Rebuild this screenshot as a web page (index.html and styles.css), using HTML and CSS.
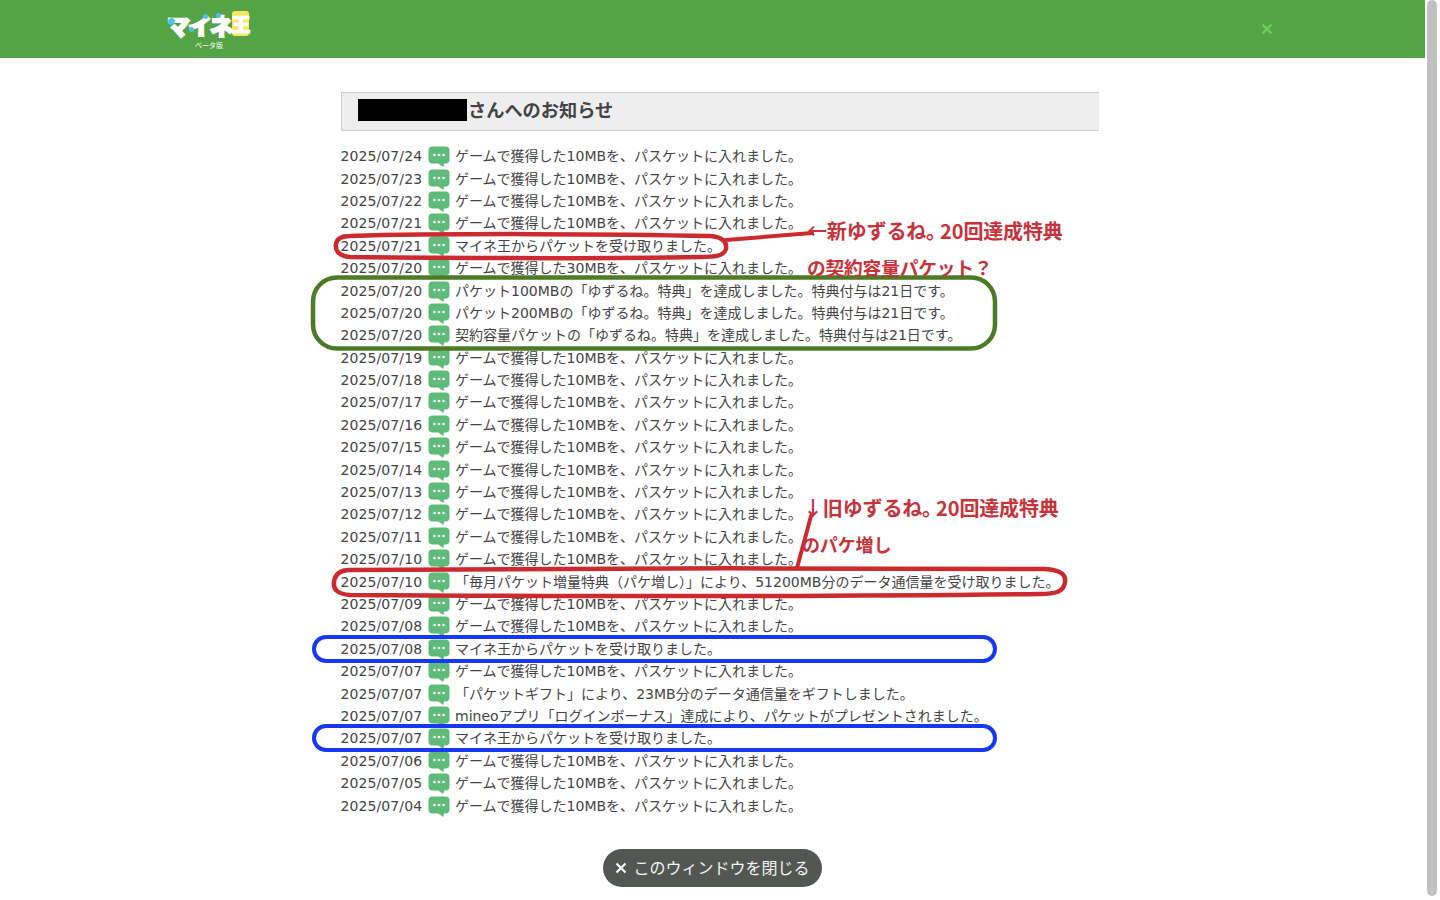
FILE: index.html
```
<!DOCTYPE html>
<html lang="ja">
<head>
<meta charset="utf-8">
<title>マイネ王 お知らせ</title>
<link rel="stylesheet" href="styles.css">
</head>
<body>
<svg width="0" height="0" class="defs"><defs>
<symbol id="bubble" viewBox="0 0 22 22">
<path d="M4.5 0.5H17.5A4 4 0 0 1 21.5 4.5V13.5A4 4 0 0 1 17.5 17.500H16L15.500 21L10 17.500H4.500A4 4 0 0 1 0.500 13.500V4.500A4 4 0 0 1 4.500 0.500Z" fill="#5fbb79"/>
<circle cx="6.500" cy="9" r="1.300" fill="#fff"/><circle cx="11" cy="9" r="1.300" fill="#fff"/><circle cx="15.500" cy="9" r="1.300" fill="#fff"/>
</symbol>
</defs></svg>
<div class="window">
  <main class="page">
    <header class="topbar">
      <div class="logo">
        <div class="logo-word"><span class="logo-kana">マイネ</span><span class="logo-king">王</span>
          <i class="spot s1"></i><i class="spot s2"></i><i class="spot s3"></i><i class="spot s4"></i>
        </div>
        <div class="logo-sub">ベータ版</div>
      </div>
      <svg class="top-close" width="12" height="12" viewBox="0 0 12 12"><path d="M1.500 1.500L10.500 10.500M10.500 1.500L1.500 10.500" stroke="#6ed05e" stroke-width="2"/></svg>
    </header>
    <section class="content">
      <h1 class="title"><span class="redact"></span><span class="title-text">さんへのお知らせ</span></h1>
      <ul class="list">
        <li><time>2025/07/24</time><svg class="ico"><use href="#bubble"/></svg><span>ゲームで獲得した10MBを、パスケットに入れました。</span></li>
        <li><time>2025/07/23</time><svg class="ico"><use href="#bubble"/></svg><span>ゲームで獲得した10MBを、パスケットに入れました。</span></li>
        <li><time>2025/07/22</time><svg class="ico"><use href="#bubble"/></svg><span>ゲームで獲得した10MBを、パスケットに入れました。</span></li>
        <li><time>2025/07/21</time><svg class="ico"><use href="#bubble"/></svg><span>ゲームで獲得した10MBを、パスケットに入れました。</span></li>
        <li><time>2025/07/21</time><svg class="ico"><use href="#bubble"/></svg><span>マイネ王からパケットを受け取りました。</span></li>
        <li><time>2025/07/20</time><svg class="ico"><use href="#bubble"/></svg><span>ゲームで獲得した30MBを、パスケットに入れました。</span></li>
        <li><time>2025/07/20</time><svg class="ico"><use href="#bubble"/></svg><span>パケット100MBの「ゆずるね。特典」を達成しました。特典付与は21日です。</span></li>
        <li><time>2025/07/20</time><svg class="ico"><use href="#bubble"/></svg><span>パケット200MBの「ゆずるね。特典」を達成しました。特典付与は21日です。</span></li>
        <li><time>2025/07/20</time><svg class="ico"><use href="#bubble"/></svg><span>契約容量パケットの「ゆずるね。特典」を達成しました。特典付与は21日です。</span></li>
        <li><time>2025/07/19</time><svg class="ico"><use href="#bubble"/></svg><span>ゲームで獲得した10MBを、パスケットに入れました。</span></li>
        <li><time>2025/07/18</time><svg class="ico"><use href="#bubble"/></svg><span>ゲームで獲得した10MBを、パスケットに入れました。</span></li>
        <li><time>2025/07/17</time><svg class="ico"><use href="#bubble"/></svg><span>ゲームで獲得した10MBを、パスケットに入れました。</span></li>
        <li><time>2025/07/16</time><svg class="ico"><use href="#bubble"/></svg><span>ゲームで獲得した10MBを、パスケットに入れました。</span></li>
        <li><time>2025/07/15</time><svg class="ico"><use href="#bubble"/></svg><span>ゲームで獲得した10MBを、パスケットに入れました。</span></li>
        <li><time>2025/07/14</time><svg class="ico"><use href="#bubble"/></svg><span>ゲームで獲得した10MBを、パスケットに入れました。</span></li>
        <li><time>2025/07/13</time><svg class="ico"><use href="#bubble"/></svg><span>ゲームで獲得した10MBを、パスケットに入れました。</span></li>
        <li><time>2025/07/12</time><svg class="ico"><use href="#bubble"/></svg><span>ゲームで獲得した10MBを、パスケットに入れました。</span></li>
        <li><time>2025/07/11</time><svg class="ico"><use href="#bubble"/></svg><span>ゲームで獲得した10MBを、パスケットに入れました。</span></li>
        <li><time>2025/07/10</time><svg class="ico"><use href="#bubble"/></svg><span>ゲームで獲得した10MBを、パスケットに入れました。</span></li>
        <li><time>2025/07/10</time><svg class="ico"><use href="#bubble"/></svg><span>「毎月パケット増量特典（パケ増し）」により、51200MB分のデータ通信量を受け取りました。</span></li>
        <li><time>2025/07/09</time><svg class="ico"><use href="#bubble"/></svg><span>ゲームで獲得した10MBを、パスケットに入れました。</span></li>
        <li><time>2025/07/08</time><svg class="ico"><use href="#bubble"/></svg><span>ゲームで獲得した10MBを、パスケットに入れました。</span></li>
        <li><time>2025/07/08</time><svg class="ico"><use href="#bubble"/></svg><span>マイネ王からパケットを受け取りました。</span></li>
        <li><time>2025/07/07</time><svg class="ico"><use href="#bubble"/></svg><span>ゲームで獲得した10MBを、パスケットに入れました。</span></li>
        <li><time>2025/07/07</time><svg class="ico"><use href="#bubble"/></svg><span>「パケットギフト」により、23MB分のデータ通信量をギフトしました。</span></li>
        <li><time>2025/07/07</time><svg class="ico"><use href="#bubble"/></svg><span>mineoアプリ「ログインボーナス」達成により、パケットがプレゼントされました。</span></li>
        <li><time>2025/07/07</time><svg class="ico"><use href="#bubble"/></svg><span>マイネ王からパケットを受け取りました。</span></li>
        <li><time>2025/07/06</time><svg class="ico"><use href="#bubble"/></svg><span>ゲームで獲得した10MBを、パスケットに入れました。</span></li>
        <li><time>2025/07/05</time><svg class="ico"><use href="#bubble"/></svg><span>ゲームで獲得した10MBを、パスケットに入れました。</span></li>
        <li><time>2025/07/04</time><svg class="ico"><use href="#bubble"/></svg><span>ゲームで獲得した10MBを、パスケットに入れました。</span></li>
      </ul>
    </section>
    <div class="foot">
      <a class="close-btn"><svg width="12" height="12" viewBox="0 0 12 12"><path d="M1.500 1.500L10.500 10.500M10.500 1.500L1.500 10.500" stroke="#fff" stroke-width="2.200"/></svg><span class="close-label">このウィンドウを閉じる</span></a>
    </div>
  </main>
  <div class="scrollbar"><div class="thumb"></div></div>
</div>

<svg class="marks" width="1440" height="900" viewBox="0 0 1440 900">
  <g fill="none" stroke-linecap="round" stroke-linejoin="round">
    <path d="M350 236C450 233 620 234 710 236C724 237 727 243 726 249C724 256 715 257 700 257C600 259 450 258 350 257C338 256 335 250 336 244C337 238 342 236 350 236Z" stroke="#cb2b2e" stroke-width="4.500"/>
    <path d="M726 240L812 233" stroke="#cb2b2e" stroke-width="4"/>
    <rect x="313" y="277.500" width="682" height="71" rx="24" stroke="#4c7a25" stroke-width="4.500"/>
    <path d="M350 570C500 568 850 568 1045 569C1060 570 1066 574 1065 582C1064 592 1055 594 1040 594C800 597 500 596 350 595C338 594 333 590 334 582C335 574 340 570 350 570Z" stroke="#cb2b2e" stroke-width="4.500"/>
    <path d="M811 516L797 568" stroke="#cb2b2e" stroke-width="4"/>
    <rect x="314" y="637" width="681" height="24" rx="12" stroke="#1638f2" stroke-width="4"/>
    <rect x="314" y="726" width="681" height="24" rx="12" stroke="#1638f2" stroke-width="4"/>
  </g>
</svg>
<div class="note n1"><span class="arrow">←</span>新ゆずるね<span class="kuten">。</span>20回達成特典</div>
<div class="note n2">の契約容量パケット？</div>
<div class="note n3"><span class="arrow">↓</span>旧ゆずるね<span class="kuten">。</span>20回達成特典</div>
<div class="note n4">のパケ増し</div>
</body>
</html>
```
FILE: styles.css
```
* { box-sizing: border-box; }
html, body { margin: 0; padding: 0; height: 900px; overflow: hidden; background: #fff; }
body {
  font-family: "DejaVu Sans", "Noto Sans CJK JP", sans-serif;
  color: #444;
  position: relative;
}
.defs { position: absolute; }
.window { display: flex; height: 900px; }
.page { width: 1425px; display: flex; flex-direction: column; }

.topbar {
  height: 58px;
  background: #52a444;
  display: flex;
  align-items: flex-start;
  padding-left: 167px;
  padding-right: 152px;
  justify-content: space-between;
}
.top-close { margin-top: 23px; }
.logo { width: 83px; padding-top: 11px; }
.logo-word {
  position: relative;
  display: flex;
  height: 29px;
  font-family: "Noto Sans CJK JP", sans-serif;
  font-weight: 900;
  line-height: 28px;
  white-space: nowrap;
}
.logo-kana {
  font-size: 23px;
  letter-spacing: -1.500px;
  color: #fff;
  -webkit-text-stroke: 1.800px #fff;
}
.logo-king {
  font-size: 19px;
  color: #fff;
  background: #f9e45a;
  border-radius: 3px;
  width: 17px;
  height: 25px;
  line-height: 25px;
  text-align: center;
  -webkit-text-stroke: 1px #fff;
}
.spot { position: absolute; border-radius: 50%; background: #55bdf0; }
.s1 { left: 1px; top: 7px; width: 7px; height: 7px; }
.s2 { left: 36px; top: 3px; width: 5px; height: 5px; }
.s3 { left: 22px; top: 16px; width: 5px; height: 5px; }
.s4 { left: 49px; top: 2px; width: 5px; height: 5px; }
.logo-sub {
  font-family: "Noto Sans CJK JP", sans-serif;
  font-size: 7px;
  line-height: 10px;
  color: #fff;
  text-align: center;
  padding-left: 1px;
}

.content { padding: 34px 0 0 341px; }
.title {
  width: 758px;
  height: 39px;
  margin: 0;
  background: #eee;
  border: 1px solid #ccc;
  border-right: 0;
  display: flex;
  align-items: center;
  padding-left: 16px;
  font-family: "Noto Sans CJK JP", sans-serif;
  font-size: 18.200px;
  font-weight: 700;
  color: #444;
}
.title-text { margin-bottom: 5px; }
.redact { width: 109px; height: 22px; background: #000; margin-right: 1px; margin-bottom: 3px; }

.list { list-style: none; margin: 14px 0 0; padding: 0; }
.list li {
  height: 22.400px;
  display: flex;
  align-items: center;
  font-size: 14px;
  white-space: nowrap;
}
.list li span { margin-top: -2px; }
.list time { width: 88px; margin-left: -0.500px; letter-spacing: 0.100px; }
.ico { width: 22px; height: 22px; margin-left: -0.500px; margin-right: 5px; flex: none; position: relative; top: 1px; }

.foot { display: flex; justify-content: center; padding-top: 32px; }
.close-btn {
  width: 219px;
  height: 38px;
  border-radius: 19px;
  background: #525753;
  color: #f4f4f4;
  display: flex;
  align-items: center;
  justify-content: center;
  gap: 6px;
  font-family: "Noto Sans CJK JP", sans-serif;
  font-size: 16px;
}
.close-label { margin-bottom: 2px; }

.scrollbar { width: 15px; background: #fff; padding: 0 2px 4px 2px; }
.thumb { width: 10px; height: 896px; background: #c1c1c1; border-radius: 5px; }

.marks { position: absolute; left: 0; top: 0; pointer-events: none; }
.note {
  position: absolute;
  font-family: "Noto Sans CJK JP", sans-serif;
  font-weight: 700;
  font-size: 20px;
  line-height: 28px;
  letter-spacing: -0.150px;
  color: #c8323a;
  white-space: nowrap;
}
.kuten { letter-spacing: -8px; margin-right: 2px; }
.n1 { left: 807px; top: 217px; }
.n2 { left: 807px; top: 253px; font-size: 18.700px; }
.n3 { left: 803px; top: 494px; }
.n4 { left: 802px; top: 530px; font-size: 18px; }
```
